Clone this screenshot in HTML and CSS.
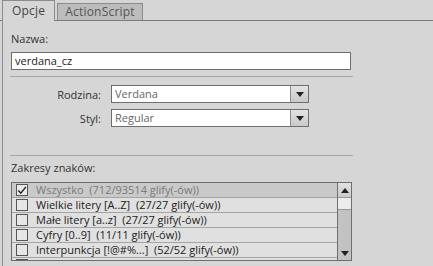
FILE: index.html
```html
<!DOCTYPE html>
<html>
<head>
<meta charset="utf-8">
<link rel="stylesheet" href="styles.css">
</head>
<body>
<div class="tabs">
  <div class="tab active">Opcje</div>
  <div class="tab">ActionScript</div>
</div>
<div class="panel">
  <div class="lbl name-lbl">Nazwa:</div>
  <div class="input">verdana_cz</div>
  <div class="sep"></div>
  <div class="form-row">
    <div class="rlbl">Rodzina:</div>
    <div class="select"><span class="val">Verdana</span><span class="btn"><span class="tri"></span></span></div>
  </div>
  <div class="form-row">
    <div class="rlbl">Styl:</div>
    <div class="select"><span class="val">Regular</span><span class="btn"><span class="tri"></span></span></div>
  </div>
  <div class="sep sep2"></div>
  <div class="lbl zak-lbl">Zakresy znaków:</div>
  <div class="list">
    <div class="rows">
      <div class="row sel dim"><span class="cb"><svg width="11" height="11" viewBox="0 0 11 11"><path d="M1.5 5.5 L4.2 8.5 L9.8 1.5" fill="none" stroke="#222" stroke-width="1.6"/></svg></span>Wszystko&nbsp; (712/93514 glify(-ów))</div>
      <div class="row"><span class="cb"></span>Wielkie litery [A..Z]&nbsp; (27/27 glify(-ów))</div>
      <div class="row"><span class="cb"></span>Małe litery [a..z]&nbsp; (27/27 glify(-ów))</div>
      <div class="row"><span class="cb"></span>Cyfry [0..9]&nbsp; (11/11 glify(-ów))</div>
      <div class="row"><span class="cb"></span>Interpunkcja [!@#%...]&nbsp; (52/52 glify(-ów))</div>
      <div class="row"><span class="cb"></span>Łaciński podstawowy&nbsp; (95/95 glify(-ów))</div>
    </div>
    <div class="sbar">
      <div class="arr up"><span class="tri-up"></span></div>
      <div class="thumb"></div>
      <div class="track"></div>
      <div class="arr down"><span class="tri"></span></div>
    </div>
  </div>
</div>
</body>
</html>
```
FILE: styles.css
```css
html, body {
  margin: 0;
  padding: 0;
  background: #d6d6d6;
  font-family: "Open Sans", "Noto Sans", sans-serif;
  font-size: 11px;
  color: #333;
  width: 433px;
  height: 266px;
  overflow: hidden;
}
.tabs {
  display: flex;
  align-items: flex-end;
  gap: 2px;
  height: 20px;
  padding-left: 2px;
  border-bottom: 1px solid #7c7c7c;
}
.tab {
  box-sizing: border-box;
  height: 17px;
  width: 86px;
  background: #bcbcbc;
  border: 1px solid #8c8c8c;
  border-bottom: none;
  color: #555;
  font-size: 12px;
  line-height: 16px;
  text-align: center;
  letter-spacing: 0.2px;
}
.tab.active {
  width: 53px;
  margin-bottom: -1px;
  height: 21px;
  background: #d6d6d6;
  color: #444;
  line-height: 20px;
}
.panel {
  margin-left: 2px;
  border-left: 1px solid #8c8c8c;
  height: 245px;
  padding-left: 8px;
  width: 342px;
}
.lbl {
  line-height: 14px;
}
.name-lbl {
  padding-top: 11px;
  height: 20px;
}
.input {
  box-sizing: border-box;
  height: 18px;
  width: 340px;
  border: 1px solid #6e6e6e;
  background: #fff;
  color: #222;
  padding-left: 3px;
  line-height: 16px;
}
.sep {
  height: 1px;
  background: #a8a8a8;
  margin-top: 6px;
  margin-bottom: 8px;
  width: 343px;
  margin-left: -1px;
}
.form-row {
  display: flex;
  align-items: center;
  height: 18px;
  margin-bottom: 6px;
}
.rlbl {
  width: 90px;
  text-align: right;
  padding-right: 10px;
}
.select {
  box-sizing: border-box;
  width: 198px;
  height: 18px;
  border: 1px solid #6e6e6e;
  background: #fff;
  display: flex;
}
.select .val {
  flex: 1;
  color: #666;
  padding-left: 3px;
  line-height: 16px;
}
.select .btn {
  width: 17px;
  border-left: 1px solid #8c8c8c;
  background: linear-gradient(#e4e4e4, #c9c9c9);
  display: flex;
  align-items: center;
  justify-content: center;
}
.tri {
  width: 0;
  height: 0;
  border-left: 4px solid transparent;
  border-right: 4px solid transparent;
  border-top: 5px solid #222;
}
.tri-up {
  width: 0;
  height: 0;
  border-left: 4px solid transparent;
  border-right: 4px solid transparent;
  border-bottom: 5px solid #222;
}
.sep2 {
  margin-top: 28px;
  margin-bottom: 5px;
}
.zak-lbl {
  height: 21px;
  line-height: 14px;
}
.list {
  box-sizing: border-box;
  width: 341px;
  height: 79px;
  border: 1px solid #6e6e6e;
  display: flex;
  overflow: hidden;
  background: #d6d6d6;
}
.rows {
  flex: 1;
  overflow: hidden;
}
.row {
  height: 14px;
  border-bottom: 1px solid #a4a4a4;
  background: #e0e0e0;
  display: flex;
  align-items: center;
  line-height: 14px;
  color: #222;
  white-space: nowrap;
}
.row.sel {
  background: #c9c9c9;
}
.row.dim {
  color: #7a7a7a;
}
.cb {
  box-sizing: border-box;
  width: 12px;
  height: 12px;
  border: 1px solid #555;
  background: #e6e6e6;
  margin-left: 4px;
  margin-right: 8px;
  display: flex;
}
.sel .cb {
  background: #e8e8e8;
}
.sbar {
  width: 13px;
  border-left: 1px solid #6e6e6e;
  display: flex;
  flex-direction: column;
  background: #c2c2c2;
}
.arr {
  height: 14px;
  background: linear-gradient(#e2e2e2, #cacaca);
  display: flex;
  align-items: center;
  justify-content: center;
}
.arr.down {
  background: #c2c2c2;
}
.thumb {
  height: 11px;
  background: #ececec;
  border-top: 1px solid #999;
  border-bottom: 1px solid #999;
}
.track {
  flex: 1;
}
```
